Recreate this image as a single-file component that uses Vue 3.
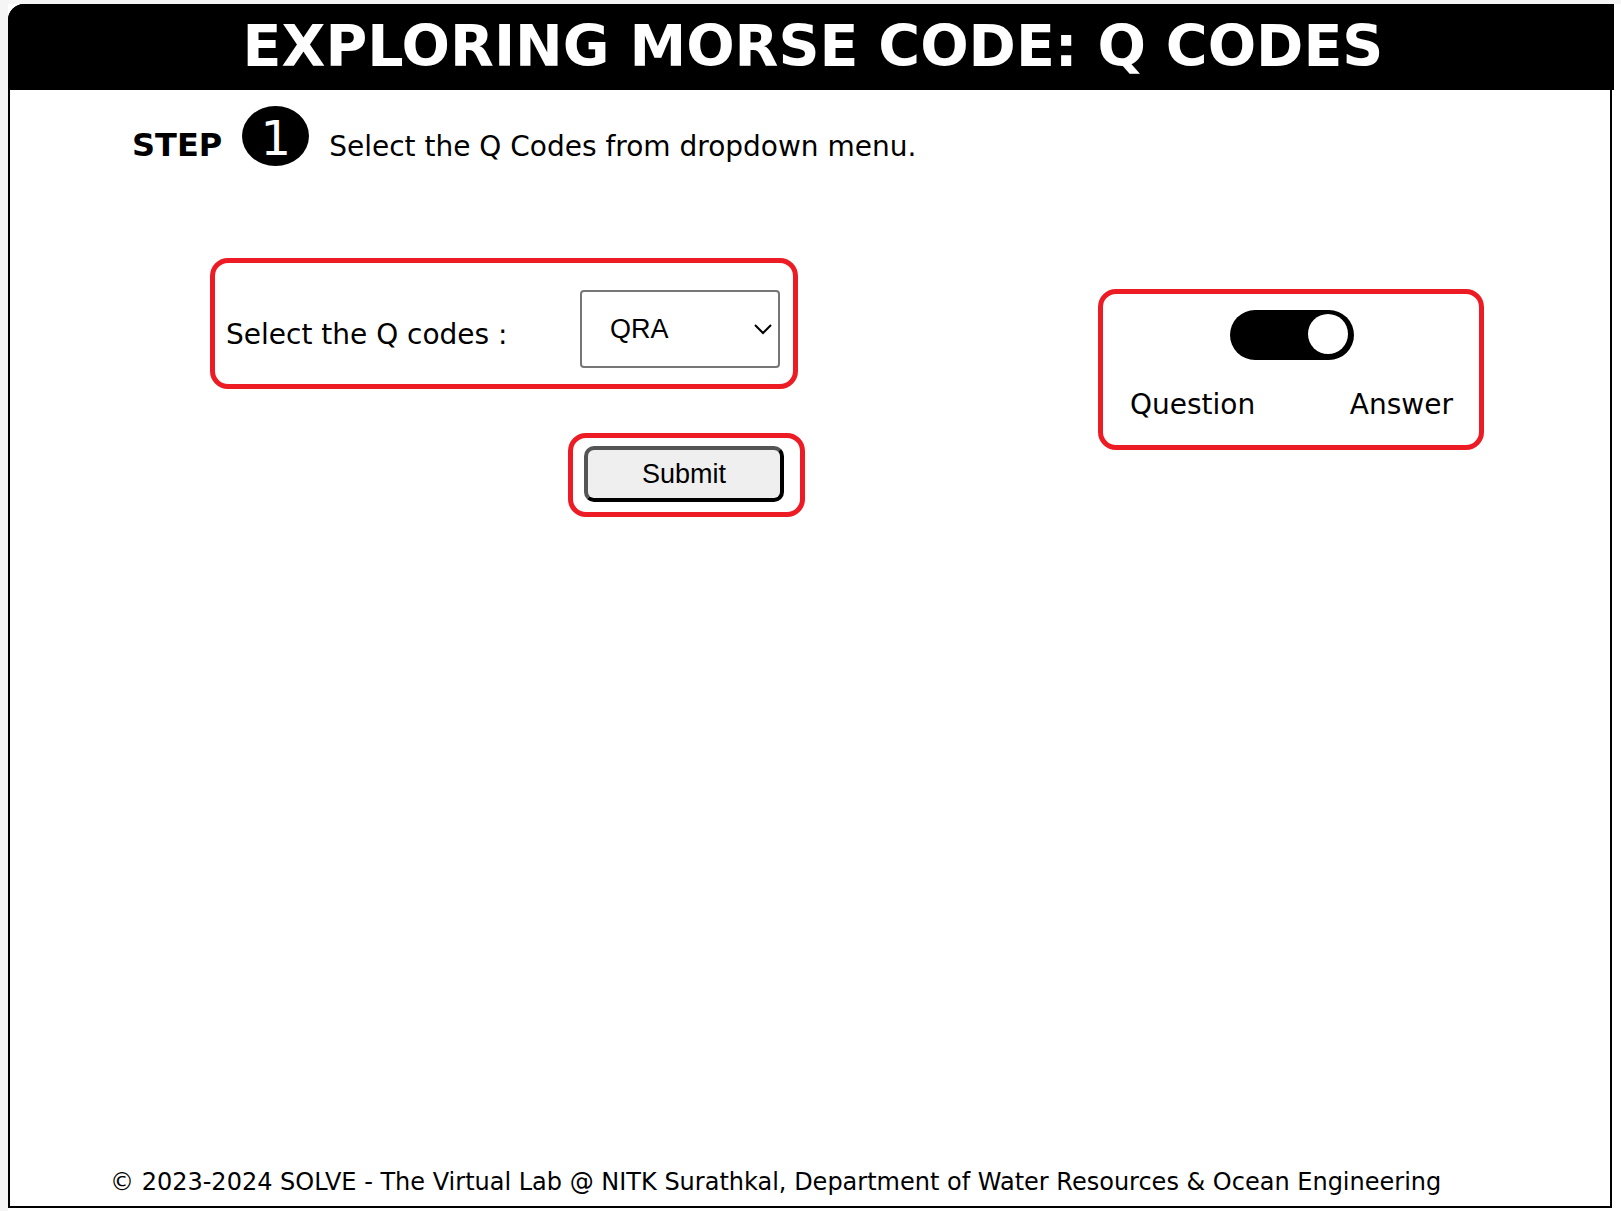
<script setup>
import { ref } from 'vue'

const codes = ['QRA', 'QRG', 'QRH', 'QRK', 'QRL', 'QRM', 'QRN', 'QRT', 'QRZ', 'QSL', 'QTH']
const selected = ref('QRA')
const showAnswer = ref(true)
</script>

<template>
  <div class="panel">
    <header class="title-bar">
      <h1>EXPLORING MORSE CODE: Q CODES</h1>
    </header>

    <div class="step">
      <strong class="step-label">STEP</strong>
      <span class="step-number">1</span>
      <p class="step-text">Select the Q Codes from dropdown menu.</p>
    </div>

    <main class="workspace">
      <form class="picker" @submit.prevent>
        <div class="frame code-row">
          <label for="code">Select the Q codes :</label>
          <div class="select-wrap">
            <select id="code" v-model="selected">
              <option v-for="code in codes" :key="code">{{ code }}</option>
            </select>
            <svg class="chevron" viewBox="0 0 18 12" aria-hidden="true">
              <path d="M1 2l8 8 8-8" fill="none" stroke="currentColor" stroke-width="2" />
            </svg>
          </div>
        </div>
        <div class="frame submit-box">
          <button type="submit">Submit</button>
        </div>
      </form>

      <div class="frame mode">
        <input v-model="showAnswer" class="toggle" type="checkbox" role="switch" aria-label="Show answer" />
        <div class="mode-labels">
          <span>Question</span>
          <span>Answer</span>
        </div>
      </div>
    </main>

    <footer>© 2023-2024 SOLVE - The Virtual Lab @ NITK Surathkal, Department of Water Resources &amp; Ocean Engineering</footer>
  </div>
</template>

<style>
body {
  background: linear-gradient(#f5f5f5 4px, transparent 4px), linear-gradient(90deg, #f5f5f5 8px, #fff 8px);
}
</style>

<style scoped>
.panel,
.panel * {
  box-sizing: border-box;
}

.panel {
  display: flex;
  flex-direction: column;
  min-height: calc(100vh - 7px);
  margin: 4px 9px 3px 8px;
  border: 2px solid #000;
  border-top-left-radius: 16px;
  background: #fff;
  color: #000;
  font-family: Verdana, "DejaVu Sans", sans-serif;
  font-size: 28px;
  line-height: 34px;
}

.title-bar {
  margin: -2px -4px 0 -2px;
  padding: 0 0 2px 4px;
  border-top-left-radius: 16px;
  background: #000;
  color: #fff;
  text-align: center;
}

h1 {
  margin: 0;
  font-size: 57px;
  line-height: 84px;
}

.step {
  display: flex;
  align-items: center;
  gap: 20px;
  padding: 16px 122px 0;
}

.step-label {
  padding-top: 18px;
  font-size: 32px;
}

.step-number {
  width: 67px;
  height: 60px;
  border-radius: 50%;
  background: #000;
  color: #fff;
  font-size: 48px;
  line-height: 64px;
  text-align: center;
}

.step-text {
  margin: 0;
  padding-top: 22px;
}

.workspace {
  display: flex;
  flex: 1;
  align-items: flex-start;
  justify-content: space-between;
  padding: 92px 126px 0 200px;
}

.frame {
  border: 5px solid #ed1c24;
  border-radius: 18px;
}

.picker {
  display: flex;
  flex-direction: column;
  gap: 44px;
}

.code-row {
  display: flex;
  align-items: center;
  justify-content: space-between;
  width: 588px;
  height: 131px;
  padding: 10px 13px 0 11px;
}

.code-row label {
  padding-top: 12px;
}

.select-wrap {
  position: relative;
}

select,
button {
  width: 200px;
  color: #000;
  font-family: Arial, "Liberation Sans", sans-serif;
  font-size: 27px;
}

select {
  display: block;
  height: 78px;
  padding: 0 28px;
  border: 2px solid #767676;
  border-radius: 4px;
  background: #fff;
  appearance: none;
}

.chevron {
  position: absolute;
  top: 33px;
  right: 8px;
  width: 18px;
  height: 12px;
  pointer-events: none;
}

.submit-box {
  align-self: flex-end;
  margin-right: -7px;
  padding: 8px 16px 10px 11px;
}

button {
  display: block;
  height: 56px;
  padding: 0;
  border: 4px solid;
  border-color: #555 #000 #000 #555;
  border-radius: 10px;
  background: #efefef;
}

.mode {
  width: 386px;
  height: 161px;
  margin-top: 31px;
  padding: 16px 26px 0 27px;
}

.toggle {
  display: block;
  width: 124px;
  height: 50px;
  margin: 0 auto;
  padding: 4px 6px;
  border-radius: 25px;
  background: #000;
  appearance: none;
}

.toggle::before {
  display: block;
  width: 40px;
  height: 40px;
  border-radius: 50%;
  background: #fff;
  content: "";
}

.toggle:checked::before {
  margin-left: auto;
}

.mode-labels {
  display: flex;
  justify-content: space-between;
  padding-top: 28px;
}

footer {
  padding: 0 100px 7px;
  font-size: 24px;
}
</style>
